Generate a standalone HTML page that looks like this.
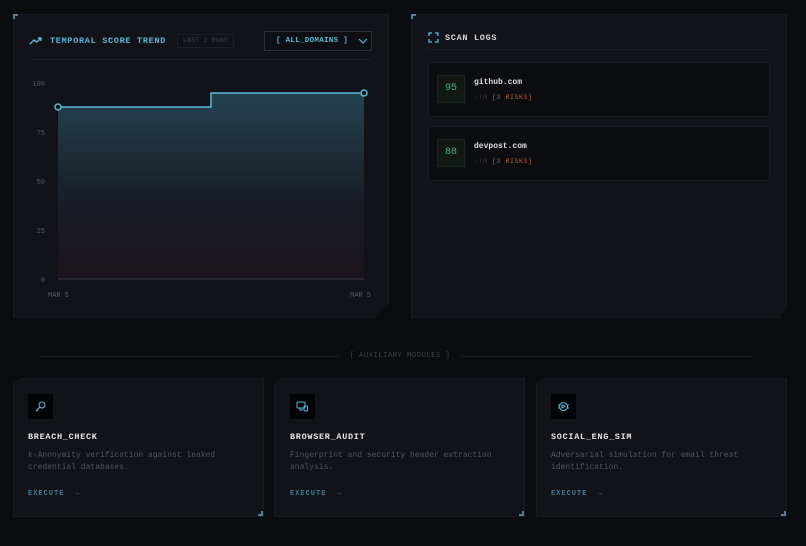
<!DOCTYPE html><html><head><style>
*{margin:0;padding:0;box-sizing:border-box}
body{width:806px;height:546px;background:#0b0c10;font-family:"Liberation Mono",monospace;position:relative;overflow:hidden;color:#ddd}
.a{position:absolute}
.panel{background:#111318;border:1px solid #171a20}
.t{font-size:8.5px;letter-spacing:.7px;font-weight:bold}
.corner{position:absolute;width:5px;height:5px;border-color:#5a7f95;border-style:solid;border-width:0}
</style></head><body>
<div class="a panel" style="left:13px;top:14px;width:376px;height:304px;clip-path:polygon(0 0,100% 0,100% 95%,96% 100%,0 100%)"></div>
<div class="corner" style="left:13px;top:14px;border-left-width:2px;border-top-width:2px"></div>
<svg class="a" style="left:29px;top:36px" width="14" height="10" viewBox="0 0 14 10"><path d="M1 8 L5 4 L8 6 L12 2 M9 2 H12 V5" stroke="#5bb8d8" stroke-width="1.4" fill="none"/></svg>
<div class="a t" style="left:50px;top:36px;color:#5bb8d8">TEMPORAL SCORE TREND</div>
<div class="a" style="left:177px;top:34px;width:57px;height:14px;border:1px solid #1c1f25;font-size:6.5px;color:#3b4048;line-height:12px;text-align:center;letter-spacing:.2px">LAST 2 RUNS</div>
<div class="a" style="left:264px;top:31px;width:108px;height:20px;border:1px solid #2a2e36;background:#0d0f13;font-size:7.5px;color:#5bb8d8;line-height:18px;padding-left:11px;letter-spacing:.3px;font-weight:bold">[ ALL_DOMAINS ]</div>
<svg class="a" style="left:358px;top:37px" width="10" height="8"><path d="M1 2 L5 6 L9 2" stroke="#5bb8d8" stroke-width="1.2" fill="none"/></svg>
<div class="a" style="left:30px;top:59px;width:341px;height:1px;background:#1a1d23"></div>
<svg class="a" style="left:0;top:0" width="400" height="320">
<defs><linearGradient id="g" x1="0" y1="0" x2="0" y2="1"><stop offset="0" stop-color="#244250"/><stop offset=".6" stop-color="#191c25"/><stop offset="1" stop-color="#1c141b"/></linearGradient></defs>
<g stroke="#181b21" stroke-dasharray="2 3"><line x1="58" y1="84" x2="364" y2="84"/><line x1="58" y1="133" x2="364" y2="133"/><line x1="58" y1="181" x2="364" y2="181"/><line x1="58" y1="230" x2="364" y2="230"/></g>
<path d="M58 107 H211 V93 H364 V279 H58Z" fill="url(#g)"/>
<path d="M58 107 H211 V93 H364" stroke="#5bb8d8" stroke-width="1.5" fill="none"/>
<line x1="58" y1="279" x2="364" y2="279" stroke="#3a3f4a"/>
<circle cx="58" cy="107" r="3" fill="#111318" stroke="#5bb8d8" stroke-width="1.5"/>
<circle cx="364" cy="93" r="3" fill="#111318" stroke="#5bb8d8" stroke-width="1.5"/>
<g font-family="Liberation Mono" font-size="7" fill="#555a64" text-anchor="end"><text x="45" y="86">100</text><text x="45" y="135">75</text><text x="45" y="184">50</text><text x="45" y="233">25</text><text x="45" y="282">0</text></g>
<g font-family="Liberation Mono" font-size="7" fill="#555a64"><text x="48" y="297">MAR 5</text><text x="350" y="297">MAR 5</text></g>
</svg>
<div class="a panel" style="left:411px;top:14px;width:376px;height:304px;clip-path:polygon(0 0,100% 0,100% 97%,98% 100%,0 100%)"></div>
<div class="corner" style="left:411px;top:14px;border-left-width:2px;border-top-width:2px"></div>
<svg class="a" style="left:428px;top:32px" width="11" height="11"><path d="M1 4V1H4M7 1H10V4M10 7V10H7M4 10H1V7" stroke="#5bb8d8" stroke-width="1.3" fill="none"/></svg>
<div class="a t" style="left:445px;top:33px;color:#d8d8d8">SCAN LOGS</div>
<div class="a" style="left:428px;top:49px;width:341px;height:1px;background:#1a1d23"></div>
<div class="a" style="left:428px;top:62px;width:342px;height:55px;background:#0c0d11;border:1px solid #181b21"></div>
<div class="a" style="left:437px;top:75px;width:28px;height:28px;background:#121915;border:1px solid #1d2520;color:#4caf78;font-size:10px;line-height:26px;text-align:center">95</div>
<div class="a" style="left:474px;top:78px;font-size:8px;font-weight:bold;color:#ddd">github.com</div>
<div class="a" style="left:474px;top:94px;font-size:6.5px;color:#3a3f47;letter-spacing:.6px">-7M <span style="color:#b5603a">[3 RISKS]</span></div>
<div class="a" style="left:428px;top:126px;width:342px;height:55px;background:#0c0d11;border:1px solid #181b21"></div>
<div class="a" style="left:437px;top:139px;width:28px;height:28px;background:#121915;border:1px solid #1d2520;color:#4caf78;font-size:10px;line-height:26px;text-align:center">88</div>
<div class="a" style="left:474px;top:142px;font-size:8px;font-weight:bold;color:#ddd">devpost.com</div>
<div class="a" style="left:474px;top:158px;font-size:6.5px;color:#3a3f47;letter-spacing:.6px">-7M <span style="color:#b5603a">[3 RISKS]</span></div>
<div class="a" style="left:40px;top:356px;width:298px;height:1px;background:#1c1f25"></div>
<div class="a" style="left:462px;top:356px;width:290px;height:1px;background:#1c1f25"></div>
<div class="a" style="left:340px;top:352px;width:120px;text-align:center;font-size:7px;color:#3e434c;letter-spacing:.6px">[ AUXILIARY MODULES ]</div>
<div class="a panel" style="left:13px;top:378px;width:251px;height:139px;clip-path:polygon(3% 0,100% 0,100% 100%,0 100%,0 4%)"></div>
<div class="a panel" style="left:274px;top:378px;width:251px;height:139px;clip-path:polygon(3% 0,100% 0,100% 100%,0 100%,0 4%)"></div>
<div class="a panel" style="left:536px;top:378px;width:251px;height:139px;clip-path:polygon(3% 0,100% 0,100% 100%,0 100%,0 4%)"></div>
<div class="corner" style="left:258px;top:511px;border-right-width:2px;border-bottom-width:2px"></div>
<div class="corner" style="left:519px;top:511px;border-right-width:2px;border-bottom-width:2px"></div>
<div class="corner" style="left:781px;top:511px;border-right-width:2px;border-bottom-width:2px"></div>

<div class="a" style="left:28px;top:394px;width:25px;height:25px;background:#030405"></div>
<svg class="a" style="left:34px;top:400px" width="13" height="13"><circle cx="8" cy="5" r="3" stroke="#5bb8d8" fill="none" stroke-width="1.1"/><path d="M6 7 L2 11 M3 10 L4 11" stroke="#5bb8d8" stroke-width="1.1"/></svg>
<div class="a t" style="left:28px;top:432px;color:#e6e6e6">BREACH_CHECK</div>
<div class="a" style="left:28px;top:450px;font-size:8px;line-height:12px;color:#50555e">k-Anonymity verification against leaked<br>credential databases.</div>
<div class="a" style="left:28px;top:490px;font-size:7px;color:#3f7f98;letter-spacing:1px;font-weight:bold">EXECUTE &nbsp;→</div>

<div class="a" style="left:290px;top:394px;width:25px;height:25px;background:#030405"></div>
<svg class="a" style="left:296px;top:400px" width="13" height="13"><rect x="1" y="2" width="8" height="6" rx="1" stroke="#5bb8d8" fill="none"/><rect x="8" y="6" width="3.5" height="5" rx="1" stroke="#5bb8d8" fill="none"/><path d="M4 8 V10 H7" stroke="#5bb8d8" fill="none"/></svg>
<div class="a t" style="left:290px;top:432px;color:#e6e6e6">BROWSER_AUDIT</div>
<div class="a" style="left:290px;top:450px;font-size:8px;line-height:12px;color:#50555e">Fingerprint and security header extraction<br>analysis.</div>
<div class="a" style="left:290px;top:490px;font-size:7px;color:#3f7f98;letter-spacing:1px;font-weight:bold">EXECUTE &nbsp;→</div>

<div class="a" style="left:551px;top:394px;width:25px;height:25px;background:#030405"></div>
<svg class="a" style="left:557px;top:400px" width="13" height="13"><circle cx="6.5" cy="6.5" r="4" stroke="#5bb8d8" fill="none" stroke-width="1.1"/><path d="M1 5 H3 M1 8 H3 M10 5 H12 M10 8 H12 M5 5 L8 6.5 L5 8Z" stroke="#5bb8d8" fill="none"/></svg>
<div class="a t" style="left:551px;top:432px;color:#e6e6e6">SOCIAL_ENG_SIM</div>
<div class="a" style="left:551px;top:450px;font-size:8px;line-height:12px;color:#50555e">Adversarial simulation for email threat<br>identification.</div>
<div class="a" style="left:551px;top:490px;font-size:7px;color:#3f7f98;letter-spacing:1px;font-weight:bold">EXECUTE &nbsp;→</div>
</body></html>
